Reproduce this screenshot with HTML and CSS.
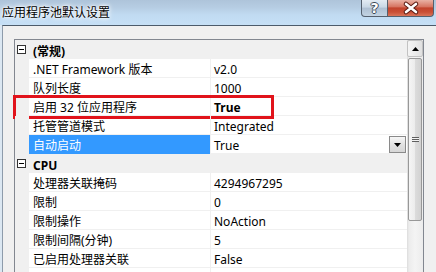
FILE: index.html
```html
<!DOCTYPE html>
<html lang="zh-CN">
<head>
<meta charset="utf-8">
<title>应用程序池默认设置</title>
<link rel="stylesheet" href="styles.css">
</head>
<body>
<div class="window">
  <div class="titlebar">
    <span class="title">应用程序池默认设置</span>
    <div class="caption">
      <div class="cbtn help">?</div>
      <div class="cbtn close">
        <svg width="44" height="17" viewBox="0 0 44 17">
          <path d="M17 4 L27 12 M27 4 L17 12" stroke="#5b1b12" stroke-width="4.6" stroke-linecap="round" fill="none"/>
          <path d="M17 4 L27 12 M27 4 L17 12" stroke="#ffffff" stroke-width="2.6" stroke-linecap="round" fill="none"/>
        </svg>
      </div>
    </div>
  </div>
  <div class="client">
    <div class="grid">
      <div class="rows">
        <div class="cat"><span class="toggle"></span><span class="cat-label">(常规)</span></div>
        <div class="row"><div class="gutter"></div><div class="name">.NET Framework 版本</div><div class="value">v2.0</div></div>
        <div class="row"><div class="gutter"></div><div class="name">队列长度</div><div class="value">1000</div></div>
        <div class="row marked"><div class="gutter"></div><div class="name">启用 32 位应用程序</div><div class="value"><b class="b">True</b></div><div class="callout"></div></div>
        <div class="row"><div class="gutter"></div><div class="name">托管管道模式</div><div class="value">Integrated</div></div>
        <div class="row sel"><div class="gutter"></div><div class="name">自动启动</div><div class="value"><span>True</span><span class="dd"><svg width="7" height="4" viewBox="0 0 7 4"><path d="M0 0 H7 L3.5 4 Z" fill="#000"/></svg></span></div></div>
        <div class="cat"><span class="toggle"></span><span class="cat-label">CPU</span></div>
        <div class="row"><div class="gutter"></div><div class="name">处理器关联掩码</div><div class="value">4294967295</div></div>
        <div class="row"><div class="gutter"></div><div class="name">限制</div><div class="value">0</div></div>
        <div class="row"><div class="gutter"></div><div class="name">限制操作</div><div class="value">NoAction</div></div>
        <div class="row"><div class="gutter"></div><div class="name">限制间隔(分钟)</div><div class="value">5</div></div>
        <div class="row"><div class="gutter"></div><div class="name">已启用处理器关联</div><div class="value">False</div></div>
        <div class="row"><div class="gutter"></div><div class="name"></div><div class="value"></div></div>
      </div>
      <div class="vscroll">
        <div class="sb-up"><svg width="7" height="4" viewBox="0 0 7 4"><path d="M3.5 0 L7 4 H0 Z" fill="#000"/></svg></div>
        <div class="sb-thumb"><span class="grip"></span></div>
      </div>
    </div>
  </div>
</div>
</body>
</html>
```

FILE: styles.css
```css
* { box-sizing: border-box; }
html, body { margin: 0; padding: 0; }
body {
  width: 436px;
  height: 272px;
  overflow: hidden;
  font-family: "Noto Sans", "Noto Sans CJK SC", sans-serif;
  font-size: 12px;
  color: #000;
  background: #dbe7f2;
}
.window {
  display: flex;
  flex-direction: column;
  height: 272px;
  background: #dbe7f2;
}
.titlebar {
  flex: none;
  height: 25px;
  display: flex;
  justify-content: space-between;
  align-items: flex-start;
  background: linear-gradient(to bottom, #aec4da 0, #b6cde3 30%, #c1dbf2 60%, #c6e0f6 100%);
}
.title {
  line-height: 26px;
  padding-left: 2px;
  white-space: nowrap;
  text-shadow: 0 0 6px #fff, 0 0 4px #fff, 0 0 2px #fff;
}
.caption { display: flex; margin-right: 2px; }
.cbtn {
  height: 17px;
  display: flex;
  align-items: center;
  justify-content: center;
  border: 1px solid #55606e;
  border-top: none;
}
.help {
  width: 27px;
  border-radius: 0 0 0 4px;
  background: linear-gradient(to bottom, #e3ebf3 0, #c9d7e5 45%, #aebfd2 50%, #c3d3e3 100%);
  color: #fff;
  font-family: "DejaVu Sans", sans-serif;
  font-weight: bold;
  font-size: 14px;
  line-height: 16px;
  text-shadow: 1px 0 0 #3d4a58, -1px 0 0 #3d4a58, 0 1px 0 #3d4a58, 0 -1px 0 #3d4a58;
}
.close {
  width: 46px;
  border-left: none;
  border-radius: 0 0 4px 0;
  background: linear-gradient(to bottom, #e9b1a4 0, #d77562 42%, #c2432c 50%, #c94f36 75%, #d9755a 100%);
}
.client {
  flex: 1;
  min-height: 0;
  overflow: hidden;
  margin-left: 2px;
  border-left: 1px solid #8d9bab;
  border-top: 1px solid #4c5b6b;
  background: #f0f0f0;
  padding: 13px 12px 0 11px;
}
.grid {
  position: relative;
  display: flex;
  height: 260px;
  border: 1px solid #828790;
  background: #fff;
}
.rows { flex: 1; min-width: 0; display: flex; flex-direction: column; }
.cat {
  height: 19px;
  flex: none;
  display: flex;
  align-items: center;
  padding-left: 2px;
  background: #f0f0f0;
  font-weight: bold;
}
.cat-label { margin-top: 4px; line-height: 15px; }
.toggle {
  position: relative;
  width: 9px;
  height: 9px;
  border: 1px solid #333;
  background: #fff;
  margin-right: 7px;
}
.toggle::after {
  content: "";
  position: absolute;
  left: 1px;
  top: 3px;
  width: 5px;
  height: 1px;
  background: #000;
}
.row { position: relative; height: 19px; flex: none; display: flex; }
.gutter { width: 14px; flex: none; background: #f0f0f0; }
.name {
  width: 181px;
  flex: none;
  padding-left: 4px;
  padding-top: 4px;
  border-bottom: 1px solid #f0f0f0;
  line-height: 14px;
  white-space: nowrap;
  overflow: hidden;
}
.value {
  flex: 1;
  min-width: 0;
  display: flex;
  align-items: center;
  justify-content: space-between;
  padding-left: 3px;
  padding-top: 4px;
  border-left: 1px solid #f0f0f0;
  border-bottom: 1px solid #f0f0f0;
  line-height: 14px;
  white-space: nowrap;
}
.b { font-weight: bold; }
.sel .name { background: #3399ff; color: #fff; border-bottom-color: #3399ff; }
.dd {
  width: 17px;
  height: 17px;
  margin-top: -3px;
  margin-right: 1px;
  display: flex;
  align-items: center;
  justify-content: center;
  border: 1px solid #8a8a8a;
  background: linear-gradient(to bottom, #f7f7f7, #e2e2e2 50%, #d6d6d6);
}
.callout {
  position: absolute;
  left: -2px;
  top: -2px;
  width: 261px;
  height: 24px;
  border: 3px solid #e1131b;
  pointer-events: none;
}
.vscroll {
  width: 16px;
  flex: none;
  display: flex;
  flex-direction: column;
  background: linear-gradient(to right, #dcdcdc 0, #ececec 2px, #f4f4f4 50%, #ececec 100%);
}
.sb-up {
  height: 17px;
  flex: none;
  display: flex;
  align-items: center;
  justify-content: center;
  border: 1px solid #c2c2c2;
  border-radius: 2px;
  background: linear-gradient(to right, #f4f4f4, #ececec 50%, #e0e0e0);
}
.sb-thumb {
  height: 163px;
  flex: none;
  margin: 1px 1px 0 1px;
  display: flex;
  align-items: center;
  justify-content: center;
  border: 1px solid #989898;
  border-radius: 2px;
  background: linear-gradient(to right, #f5f5f5 0, #ececec 50%, #dcdcdc 51%, #d2d2d2 100%);
}
.grip {
  width: 7px;
  height: 5px;
  background: repeating-linear-gradient(to bottom, #5f5f5f 0 1px, #f2f2f2 1px 2px);
}
```
